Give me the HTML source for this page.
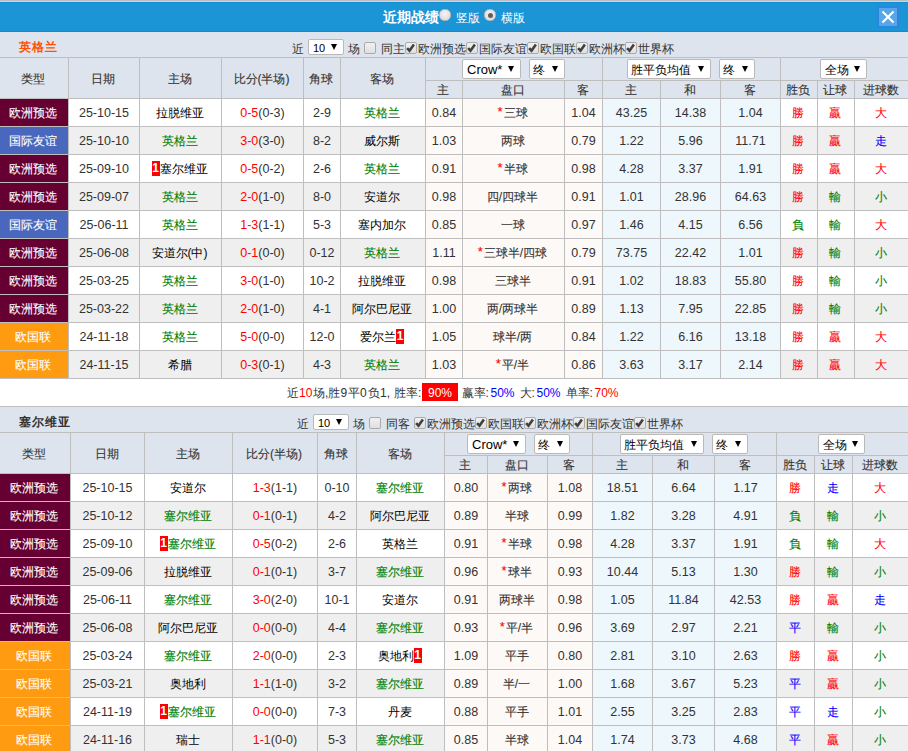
<!DOCTYPE html><html><head><meta charset="utf-8"><style>
html,body{margin:0;padding:0;width:908px;height:751px;overflow:hidden;background:#fff;font-family:"Liberation Sans",sans-serif;}
body>div{position:absolute;}
.t,.c{white-space:nowrap;overflow:visible;}
.c{-webkit-text-stroke:0.1px}
.sel{position:absolute;background:#fff;border:1px solid #b9b9b9;border-radius:2px;color:#000;font-family:"Liberation Sans",sans-serif;}
.arr{position:absolute;width:0;height:0;border-left:3px solid transparent;border-right:3px solid transparent;border-top:6px solid #000;}
.cb{position:absolute;width:10px;height:10px;border:1px solid #ababab;border-radius:2px;background:linear-gradient(#f0f0f0,#e0e0e0);box-sizing:content-box;}
.cb svg{left:-1px!important;top:-1px!important}
.bd{display:inline-block;background:#f00;color:#fff;font-weight:bold;font-size:12px;width:8px;height:15px;line-height:15px;text-align:center;vertical-align:middle;margin-top:-2px}

</style></head><body>
<div style="left:0px;top:0px;width:908px;height:1px;background:#bdbdc1;"></div>
<div style="left:0px;top:1px;width:908px;height:1px;background:#e8d3a6;"></div>
<div style="left:0px;top:2px;width:908px;height:30px;background:#1b95d6;"></div>
<div style="left:0px;top:2px;width:908px;height:1px;background:#0f8ed3;"></div>
<div style="left:0px;top:31px;width:908px;height:1px;background:#0c8cd2;"></div>
<div class="t" style="left:383px;top:7px;width:60px;height:20px;line-height:20px;color:#fff;font-size:14px;font-weight:bold;text-align:left;">近期战绩</div>
<div style="left:439px;top:9px;width:12px;height:12px;border-radius:50%;background:radial-gradient(circle at 50% 40%,#f4f4f4,#d0d0d0);box-shadow:0 0 0 0.5px #9a9a9a inset"></div>
<div class="t" style="left:456px;top:8px;width:30px;height:20px;line-height:20px;color:#fff;font-size:12px;font-weight:normal;text-align:left;">竖版</div>
<div style="left:484px;top:9px;width:12px;height:12px;border-radius:50%;background:radial-gradient(circle at 50% 40%,#f4f4f4,#d0d0d0);box-shadow:0 0 0 0.5px #9a9a9a inset"><div style="position:absolute;left:3.5px;top:3.5px;width:5px;height:5px;border-radius:50%;background:#606060"></div></div>
<div class="t" style="left:501px;top:8px;width:30px;height:20px;line-height:20px;color:#fff;font-size:12px;font-weight:normal;text-align:left;">横版</div>
<div style="left:877px;top:6px;width:22px;height:22px;background:#2b86de;"></div>
<div style="left:879px;top:8px;width:18px;height:18px;background:#57a6ea;"></div>
<svg style="position:absolute;left:877px;top:6px" width="22" height="22" viewBox="0 0 22 22"><path d="M6.2 6.2 L15.8 15.8 M15.8 6.2 L6.2 15.8" stroke="#fff" stroke-width="2.1" stroke-linecap="square"/></svg>
<div style="left:0px;top:32px;width:908px;height:25px;background:#dde4ed;"></div>
<div class="t" style="left:19px;top:32px;width:80px;height:30px;line-height:30px;color:#ff5200;font-size:12px;font-weight:bold;text-align:left;letter-spacing:1px">英格兰</div>
<div class="t" style="left:292px;top:40px;width:14px;height:18px;line-height:18px;color:#333;font-size:12px;font-weight:normal;text-align:left;">近</div>
<div class="sel" style="left:308px;top:39px;width:34px;height:14px;"><span style="position:absolute;left:4px;top:1px;line-height:14px;font-size:11px">10</span><span class="arr" style="right:6px;top:4px"></span></div>
<div class="t" style="left:348px;top:40px;width:14px;height:18px;line-height:18px;color:#333;font-size:12px;font-weight:normal;text-align:left;">场</div>
<div class="cb" style="left:364px;top:42px"></div>
<div class="t" style="left:381px;top:40px;width:30px;height:18px;line-height:18px;color:#333;font-size:12px;font-weight:normal;text-align:left;">同主</div>
<div class="cb" style="left:405px;top:42px"><svg width="12" height="12" viewBox="0 0 12 12" style="position:absolute;left:0;top:0"><path d="M2.1 6.2 L4.5 8.7 L8.9 2.5" stroke="#404040" stroke-width="2.6" fill="none"/></svg></div>
<div class="t" style="left:418px;top:40px;width:50px;height:18px;line-height:18px;color:#333;font-size:12px;font-weight:normal;text-align:left;">欧洲预选</div>
<div class="cb" style="left:466px;top:42px"><svg width="12" height="12" viewBox="0 0 12 12" style="position:absolute;left:0;top:0"><path d="M2.1 6.2 L4.5 8.7 L8.9 2.5" stroke="#404040" stroke-width="2.6" fill="none"/></svg></div>
<div class="t" style="left:479px;top:40px;width:50px;height:18px;line-height:18px;color:#333;font-size:12px;font-weight:normal;text-align:left;">国际友谊</div>
<div class="cb" style="left:527px;top:42px"><svg width="12" height="12" viewBox="0 0 12 12" style="position:absolute;left:0;top:0"><path d="M2.1 6.2 L4.5 8.7 L8.9 2.5" stroke="#404040" stroke-width="2.6" fill="none"/></svg></div>
<div class="t" style="left:540px;top:40px;width:38px;height:18px;line-height:18px;color:#333;font-size:12px;font-weight:normal;text-align:left;">欧国联</div>
<div class="cb" style="left:576px;top:42px"><svg width="12" height="12" viewBox="0 0 12 12" style="position:absolute;left:0;top:0"><path d="M2.1 6.2 L4.5 8.7 L8.9 2.5" stroke="#404040" stroke-width="2.6" fill="none"/></svg></div>
<div class="t" style="left:589px;top:40px;width:38px;height:18px;line-height:18px;color:#333;font-size:12px;font-weight:normal;text-align:left;">欧洲杯</div>
<div class="cb" style="left:625px;top:42px"><svg width="12" height="12" viewBox="0 0 12 12" style="position:absolute;left:0;top:0"><path d="M2.1 6.2 L4.5 8.7 L8.9 2.5" stroke="#404040" stroke-width="2.6" fill="none"/></svg></div>
<div class="t" style="left:638px;top:40px;width:38px;height:18px;line-height:18px;color:#333;font-size:12px;font-weight:normal;text-align:left;">世界杯</div>
<div style="left:0px;top:58px;width:908px;height:40px;background:#dde4ed;"></div>
<div style="left:0px;top:57px;width:908px;height:1px;background:#bebebe;"></div>
<div style="left:425px;top:80px;width:483px;height:1px;background:#bebebe;"></div>
<div class="c" style="left:-1px;top:59px;width:68px;height:40px;line-height:40px;color:#333;font-size:12px;font-weight:normal;text-align:center;">类型</div>
<div class="c" style="left:68px;top:59px;width:70px;height:40px;line-height:40px;color:#333;font-size:12px;font-weight:normal;text-align:center;">日期</div>
<div class="c" style="left:139px;top:59px;width:81px;height:40px;line-height:40px;color:#333;font-size:12px;font-weight:normal;text-align:center;">主场</div>
<div class="c" style="left:221px;top:59px;width:81px;height:40px;line-height:40px;color:#333;font-size:12px;font-weight:normal;text-align:center;">比分(半场)</div>
<div class="c" style="left:303px;top:59px;width:36px;height:40px;line-height:40px;color:#333;font-size:12px;font-weight:normal;text-align:center;">角球</div>
<div class="c" style="left:340px;top:59px;width:84px;height:40px;line-height:40px;color:#333;font-size:12px;font-weight:normal;text-align:center;">客场</div>
<div class="c" style="left:425px;top:82px;width:36px;height:17px;line-height:17px;color:#333;font-size:12px;font-weight:normal;text-align:center;">主</div>
<div class="c" style="left:462px;top:82px;width:101px;height:17px;line-height:17px;color:#333;font-size:12px;font-weight:normal;text-align:center;">盘口</div>
<div class="c" style="left:564px;top:82px;width:37px;height:17px;line-height:17px;color:#333;font-size:12px;font-weight:normal;text-align:center;">客</div>
<div class="c" style="left:602px;top:82px;width:57px;height:17px;line-height:17px;color:#333;font-size:12px;font-weight:normal;text-align:center;">主</div>
<div class="c" style="left:660px;top:82px;width:59px;height:17px;line-height:17px;color:#333;font-size:12px;font-weight:normal;text-align:center;">和</div>
<div class="c" style="left:720px;top:82px;width:59px;height:17px;line-height:17px;color:#333;font-size:12px;font-weight:normal;text-align:center;">客</div>
<div class="c" style="left:780px;top:82px;width:36px;height:17px;line-height:17px;color:#333;font-size:12px;font-weight:normal;text-align:center;">胜负</div>
<div class="c" style="left:817px;top:82px;width:36px;height:17px;line-height:17px;color:#333;font-size:12px;font-weight:normal;text-align:center;">让球</div>
<div class="c" style="left:854px;top:82px;width:53px;height:17px;line-height:17px;color:#333;font-size:12px;font-weight:normal;text-align:center;">进球数</div>
<div class="sel" style="left:462px;top:59px;width:57px;height:18px;"><span style="position:absolute;left:4px;top:1px;line-height:18px;font-size:13px">Crow*</span><span class="arr" style="right:6px;top:6px"></span></div>
<div class="sel" style="left:529px;top:59px;width:34px;height:18px;"><span style="position:absolute;left:3px;top:1px;line-height:18px;font-size:12px">终</span><span class="arr" style="right:6px;top:6px"></span></div>
<div class="sel" style="left:627px;top:59px;width:82px;height:18px;"><span style="position:absolute;left:3px;top:1px;line-height:18px;font-size:12px">胜平负均值</span><span class="arr" style="right:6px;top:6px"></span></div>
<div class="sel" style="left:719px;top:59px;width:34px;height:18px;"><span style="position:absolute;left:3px;top:1px;line-height:18px;font-size:12px">终</span><span class="arr" style="right:6px;top:6px"></span></div>
<div class="sel" style="left:820px;top:59px;width:45px;height:18px;"><span style="position:absolute;left:4px;top:1px;line-height:18px;font-size:12px">全场</span><span class="arr" style="right:6px;top:6px"></span></div>
<div style="left:0px;top:98px;width:908px;height:1px;background:#bebebe;"></div>
<div style="left:0px;top:99px;width:68px;height:27px;background:#660033;"></div>
<div style="left:69px;top:99px;width:356px;height:27px;background:#fff;"></div>
<div style="left:426px;top:99px;width:176px;height:27px;background:#fdf9f7;"></div>
<div style="left:603px;top:99px;width:177px;height:27px;background:#eef7fb;"></div>
<div style="left:781px;top:99px;width:127px;height:27px;background:#fff;"></div>
<div class="c" style="left:-1px;top:100px;width:68px;height:27px;line-height:27px;color:#fff;font-size:12px;font-weight:normal;text-align:center;">欧洲预选</div>
<div class="t" style="left:69px;top:100px;width:70px;height:27px;line-height:27px;color:#333;font-size:12.5px;font-weight:normal;text-align:center;">25-10-15</div>
<div class="t" style="left:139px;top:100px;width:81px;height:27px;line-height:27px;color:#000;font-size:12px;font-weight:normal;text-align:center;"><span style="color:#000">拉脱维亚</span></div>
<div class="t" style="left:222px;top:100px;width:81px;height:27px;line-height:27px;color:#333;font-size:12.5px;font-weight:normal;text-align:center;"><span style="color:#ff0000">0-5</span>(0-3)</div>
<div class="t" style="left:304px;top:100px;width:36px;height:27px;line-height:27px;color:#333;font-size:12.5px;font-weight:normal;text-align:center;">2-9</div>
<div class="t" style="left:340px;top:100px;width:84px;height:27px;line-height:27px;color:#000;font-size:12px;font-weight:normal;text-align:center;"><span style="color:#008000"><span style="-webkit-text-stroke:0.1px">英格兰</span></span></div>
<div class="t" style="left:426px;top:100px;width:36px;height:27px;line-height:27px;color:#333;font-size:12.5px;font-weight:normal;text-align:center;">0.84</div>
<div class="c" style="left:462px;top:100px;width:101px;height:27px;line-height:27px;color:#333;font-size:12px;font-weight:normal;text-align:center;"><span style="color:#ff0000;font-size:13px;line-height:0;padding-right:1px;position:relative;top:-1px">*</span>三球</div>
<div class="t" style="left:565px;top:100px;width:37px;height:27px;line-height:27px;color:#333;font-size:12.5px;font-weight:normal;text-align:center;">1.04</div>
<div class="t" style="left:603px;top:100px;width:57px;height:27px;line-height:27px;color:#333;font-size:12.5px;font-weight:normal;text-align:center;">43.25</div>
<div class="t" style="left:661px;top:100px;width:59px;height:27px;line-height:27px;color:#333;font-size:12.5px;font-weight:normal;text-align:center;">14.38</div>
<div class="t" style="left:721px;top:100px;width:59px;height:27px;line-height:27px;color:#333;font-size:12.5px;font-weight:normal;text-align:center;">1.04</div>
<div class="c" style="left:780px;top:100px;width:36px;height:27px;line-height:27px;color:#ff0000;font-size:12px;font-weight:normal;text-align:center;">勝</div>
<div class="c" style="left:817px;top:100px;width:36px;height:27px;line-height:27px;color:#ff0000;font-size:12px;font-weight:normal;text-align:center;">贏</div>
<div class="c" style="left:854px;top:100px;width:53px;height:27px;line-height:27px;color:#ff0000;font-size:12px;font-weight:normal;text-align:center;">大</div>
<div style="left:0px;top:126px;width:908px;height:1px;background:#bebebe;"></div>
<div style="left:0px;top:127px;width:68px;height:27px;background:#4867bd;"></div>
<div style="left:69px;top:127px;width:356px;height:27px;background:#efefef;"></div>
<div style="left:426px;top:127px;width:176px;height:27px;background:#fdf9f7;"></div>
<div style="left:603px;top:127px;width:177px;height:27px;background:#eef7fb;"></div>
<div style="left:781px;top:127px;width:127px;height:27px;background:#efefef;"></div>
<div class="c" style="left:-1px;top:128px;width:68px;height:27px;line-height:27px;color:#fff;font-size:12px;font-weight:normal;text-align:center;">国际友谊</div>
<div class="t" style="left:69px;top:128px;width:70px;height:27px;line-height:27px;color:#333;font-size:12.5px;font-weight:normal;text-align:center;">25-10-10</div>
<div class="t" style="left:139px;top:128px;width:81px;height:27px;line-height:27px;color:#000;font-size:12px;font-weight:normal;text-align:center;"><span style="color:#008000"><span style="-webkit-text-stroke:0.1px">英格兰</span></span></div>
<div class="t" style="left:222px;top:128px;width:81px;height:27px;line-height:27px;color:#333;font-size:12.5px;font-weight:normal;text-align:center;"><span style="color:#ff0000">3-0</span>(3-0)</div>
<div class="t" style="left:304px;top:128px;width:36px;height:27px;line-height:27px;color:#333;font-size:12.5px;font-weight:normal;text-align:center;">8-2</div>
<div class="t" style="left:340px;top:128px;width:84px;height:27px;line-height:27px;color:#000;font-size:12px;font-weight:normal;text-align:center;"><span style="color:#000">威尔斯</span></div>
<div class="t" style="left:426px;top:128px;width:36px;height:27px;line-height:27px;color:#333;font-size:12.5px;font-weight:normal;text-align:center;">1.03</div>
<div class="c" style="left:462px;top:128px;width:101px;height:27px;line-height:27px;color:#333;font-size:12px;font-weight:normal;text-align:center;">两球</div>
<div class="t" style="left:565px;top:128px;width:37px;height:27px;line-height:27px;color:#333;font-size:12.5px;font-weight:normal;text-align:center;">0.79</div>
<div class="t" style="left:603px;top:128px;width:57px;height:27px;line-height:27px;color:#333;font-size:12.5px;font-weight:normal;text-align:center;">1.22</div>
<div class="t" style="left:661px;top:128px;width:59px;height:27px;line-height:27px;color:#333;font-size:12.5px;font-weight:normal;text-align:center;">5.96</div>
<div class="t" style="left:721px;top:128px;width:59px;height:27px;line-height:27px;color:#333;font-size:12.5px;font-weight:normal;text-align:center;">11.71</div>
<div class="c" style="left:780px;top:128px;width:36px;height:27px;line-height:27px;color:#ff0000;font-size:12px;font-weight:normal;text-align:center;">勝</div>
<div class="c" style="left:817px;top:128px;width:36px;height:27px;line-height:27px;color:#ff0000;font-size:12px;font-weight:normal;text-align:center;">贏</div>
<div class="c" style="left:854px;top:128px;width:53px;height:27px;line-height:27px;color:#0000ff;font-size:12px;font-weight:normal;text-align:center;">走</div>
<div style="left:0px;top:154px;width:908px;height:1px;background:#bebebe;"></div>
<div style="left:0px;top:155px;width:68px;height:27px;background:#660033;"></div>
<div style="left:69px;top:155px;width:356px;height:27px;background:#fff;"></div>
<div style="left:426px;top:155px;width:176px;height:27px;background:#fdf9f7;"></div>
<div style="left:603px;top:155px;width:177px;height:27px;background:#eef7fb;"></div>
<div style="left:781px;top:155px;width:127px;height:27px;background:#fff;"></div>
<div class="c" style="left:-1px;top:156px;width:68px;height:27px;line-height:27px;color:#fff;font-size:12px;font-weight:normal;text-align:center;">欧洲预选</div>
<div class="t" style="left:69px;top:156px;width:70px;height:27px;line-height:27px;color:#333;font-size:12.5px;font-weight:normal;text-align:center;">25-09-10</div>
<div class="t" style="left:139px;top:156px;width:81px;height:27px;line-height:27px;color:#000;font-size:12px;font-weight:normal;text-align:center;"><span class="bd">1</span><span style="color:#000">塞尔维亚</span></div>
<div class="t" style="left:222px;top:156px;width:81px;height:27px;line-height:27px;color:#333;font-size:12.5px;font-weight:normal;text-align:center;"><span style="color:#ff0000">0-5</span>(0-2)</div>
<div class="t" style="left:304px;top:156px;width:36px;height:27px;line-height:27px;color:#333;font-size:12.5px;font-weight:normal;text-align:center;">2-6</div>
<div class="t" style="left:340px;top:156px;width:84px;height:27px;line-height:27px;color:#000;font-size:12px;font-weight:normal;text-align:center;"><span style="color:#008000"><span style="-webkit-text-stroke:0.1px">英格兰</span></span></div>
<div class="t" style="left:426px;top:156px;width:36px;height:27px;line-height:27px;color:#333;font-size:12.5px;font-weight:normal;text-align:center;">0.91</div>
<div class="c" style="left:462px;top:156px;width:101px;height:27px;line-height:27px;color:#333;font-size:12px;font-weight:normal;text-align:center;"><span style="color:#ff0000;font-size:13px;line-height:0;padding-right:1px;position:relative;top:-1px">*</span>半球</div>
<div class="t" style="left:565px;top:156px;width:37px;height:27px;line-height:27px;color:#333;font-size:12.5px;font-weight:normal;text-align:center;">0.98</div>
<div class="t" style="left:603px;top:156px;width:57px;height:27px;line-height:27px;color:#333;font-size:12.5px;font-weight:normal;text-align:center;">4.28</div>
<div class="t" style="left:661px;top:156px;width:59px;height:27px;line-height:27px;color:#333;font-size:12.5px;font-weight:normal;text-align:center;">3.37</div>
<div class="t" style="left:721px;top:156px;width:59px;height:27px;line-height:27px;color:#333;font-size:12.5px;font-weight:normal;text-align:center;">1.91</div>
<div class="c" style="left:780px;top:156px;width:36px;height:27px;line-height:27px;color:#ff0000;font-size:12px;font-weight:normal;text-align:center;">勝</div>
<div class="c" style="left:817px;top:156px;width:36px;height:27px;line-height:27px;color:#ff0000;font-size:12px;font-weight:normal;text-align:center;">贏</div>
<div class="c" style="left:854px;top:156px;width:53px;height:27px;line-height:27px;color:#ff0000;font-size:12px;font-weight:normal;text-align:center;">大</div>
<div style="left:0px;top:182px;width:908px;height:1px;background:#bebebe;"></div>
<div style="left:0px;top:183px;width:68px;height:27px;background:#660033;"></div>
<div style="left:69px;top:183px;width:356px;height:27px;background:#efefef;"></div>
<div style="left:426px;top:183px;width:176px;height:27px;background:#fdf9f7;"></div>
<div style="left:603px;top:183px;width:177px;height:27px;background:#eef7fb;"></div>
<div style="left:781px;top:183px;width:127px;height:27px;background:#efefef;"></div>
<div class="c" style="left:-1px;top:184px;width:68px;height:27px;line-height:27px;color:#fff;font-size:12px;font-weight:normal;text-align:center;">欧洲预选</div>
<div class="t" style="left:69px;top:184px;width:70px;height:27px;line-height:27px;color:#333;font-size:12.5px;font-weight:normal;text-align:center;">25-09-07</div>
<div class="t" style="left:139px;top:184px;width:81px;height:27px;line-height:27px;color:#000;font-size:12px;font-weight:normal;text-align:center;"><span style="color:#008000"><span style="-webkit-text-stroke:0.1px">英格兰</span></span></div>
<div class="t" style="left:222px;top:184px;width:81px;height:27px;line-height:27px;color:#333;font-size:12.5px;font-weight:normal;text-align:center;"><span style="color:#ff0000">2-0</span>(1-0)</div>
<div class="t" style="left:304px;top:184px;width:36px;height:27px;line-height:27px;color:#333;font-size:12.5px;font-weight:normal;text-align:center;">8-0</div>
<div class="t" style="left:340px;top:184px;width:84px;height:27px;line-height:27px;color:#000;font-size:12px;font-weight:normal;text-align:center;"><span style="color:#000">安道尔</span></div>
<div class="t" style="left:426px;top:184px;width:36px;height:27px;line-height:27px;color:#333;font-size:12.5px;font-weight:normal;text-align:center;">0.98</div>
<div class="c" style="left:462px;top:184px;width:101px;height:27px;line-height:27px;color:#333;font-size:12px;font-weight:normal;text-align:center;">四/四球半</div>
<div class="t" style="left:565px;top:184px;width:37px;height:27px;line-height:27px;color:#333;font-size:12.5px;font-weight:normal;text-align:center;">0.91</div>
<div class="t" style="left:603px;top:184px;width:57px;height:27px;line-height:27px;color:#333;font-size:12.5px;font-weight:normal;text-align:center;">1.01</div>
<div class="t" style="left:661px;top:184px;width:59px;height:27px;line-height:27px;color:#333;font-size:12.5px;font-weight:normal;text-align:center;">28.96</div>
<div class="t" style="left:721px;top:184px;width:59px;height:27px;line-height:27px;color:#333;font-size:12.5px;font-weight:normal;text-align:center;">64.63</div>
<div class="c" style="left:780px;top:184px;width:36px;height:27px;line-height:27px;color:#ff0000;font-size:12px;font-weight:normal;text-align:center;">勝</div>
<div class="c" style="left:817px;top:184px;width:36px;height:27px;line-height:27px;color:#008000;font-size:12px;font-weight:normal;text-align:center;">輸</div>
<div class="c" style="left:854px;top:184px;width:53px;height:27px;line-height:27px;color:#008000;font-size:12px;font-weight:normal;text-align:center;">小</div>
<div style="left:0px;top:210px;width:908px;height:1px;background:#bebebe;"></div>
<div style="left:0px;top:211px;width:68px;height:27px;background:#4867bd;"></div>
<div style="left:69px;top:211px;width:356px;height:27px;background:#fff;"></div>
<div style="left:426px;top:211px;width:176px;height:27px;background:#fdf9f7;"></div>
<div style="left:603px;top:211px;width:177px;height:27px;background:#eef7fb;"></div>
<div style="left:781px;top:211px;width:127px;height:27px;background:#fff;"></div>
<div class="c" style="left:-1px;top:212px;width:68px;height:27px;line-height:27px;color:#fff;font-size:12px;font-weight:normal;text-align:center;">国际友谊</div>
<div class="t" style="left:69px;top:212px;width:70px;height:27px;line-height:27px;color:#333;font-size:12.5px;font-weight:normal;text-align:center;">25-06-11</div>
<div class="t" style="left:139px;top:212px;width:81px;height:27px;line-height:27px;color:#000;font-size:12px;font-weight:normal;text-align:center;"><span style="color:#008000"><span style="-webkit-text-stroke:0.1px">英格兰</span></span></div>
<div class="t" style="left:222px;top:212px;width:81px;height:27px;line-height:27px;color:#333;font-size:12.5px;font-weight:normal;text-align:center;"><span style="color:#ff0000">1-3</span>(1-1)</div>
<div class="t" style="left:304px;top:212px;width:36px;height:27px;line-height:27px;color:#333;font-size:12.5px;font-weight:normal;text-align:center;">5-3</div>
<div class="t" style="left:340px;top:212px;width:84px;height:27px;line-height:27px;color:#000;font-size:12px;font-weight:normal;text-align:center;"><span style="color:#000">塞内加尔</span></div>
<div class="t" style="left:426px;top:212px;width:36px;height:27px;line-height:27px;color:#333;font-size:12.5px;font-weight:normal;text-align:center;">0.85</div>
<div class="c" style="left:462px;top:212px;width:101px;height:27px;line-height:27px;color:#333;font-size:12px;font-weight:normal;text-align:center;">一球</div>
<div class="t" style="left:565px;top:212px;width:37px;height:27px;line-height:27px;color:#333;font-size:12.5px;font-weight:normal;text-align:center;">0.97</div>
<div class="t" style="left:603px;top:212px;width:57px;height:27px;line-height:27px;color:#333;font-size:12.5px;font-weight:normal;text-align:center;">1.46</div>
<div class="t" style="left:661px;top:212px;width:59px;height:27px;line-height:27px;color:#333;font-size:12.5px;font-weight:normal;text-align:center;">4.15</div>
<div class="t" style="left:721px;top:212px;width:59px;height:27px;line-height:27px;color:#333;font-size:12.5px;font-weight:normal;text-align:center;">6.56</div>
<div class="c" style="left:780px;top:212px;width:36px;height:27px;line-height:27px;color:#008000;font-size:12px;font-weight:normal;text-align:center;">負</div>
<div class="c" style="left:817px;top:212px;width:36px;height:27px;line-height:27px;color:#008000;font-size:12px;font-weight:normal;text-align:center;">輸</div>
<div class="c" style="left:854px;top:212px;width:53px;height:27px;line-height:27px;color:#ff0000;font-size:12px;font-weight:normal;text-align:center;">大</div>
<div style="left:0px;top:238px;width:908px;height:1px;background:#bebebe;"></div>
<div style="left:0px;top:239px;width:68px;height:27px;background:#660033;"></div>
<div style="left:69px;top:239px;width:356px;height:27px;background:#efefef;"></div>
<div style="left:426px;top:239px;width:176px;height:27px;background:#fdf9f7;"></div>
<div style="left:603px;top:239px;width:177px;height:27px;background:#eef7fb;"></div>
<div style="left:781px;top:239px;width:127px;height:27px;background:#efefef;"></div>
<div class="c" style="left:-1px;top:240px;width:68px;height:27px;line-height:27px;color:#fff;font-size:12px;font-weight:normal;text-align:center;">欧洲预选</div>
<div class="t" style="left:69px;top:240px;width:70px;height:27px;line-height:27px;color:#333;font-size:12.5px;font-weight:normal;text-align:center;">25-06-08</div>
<div class="t" style="left:139px;top:240px;width:81px;height:27px;line-height:27px;color:#000;font-size:12px;font-weight:normal;text-align:center;"><span style="color:#000">安道尔(中)</span></div>
<div class="t" style="left:222px;top:240px;width:81px;height:27px;line-height:27px;color:#333;font-size:12.5px;font-weight:normal;text-align:center;"><span style="color:#ff0000">0-1</span>(0-0)</div>
<div class="t" style="left:304px;top:240px;width:36px;height:27px;line-height:27px;color:#333;font-size:12.5px;font-weight:normal;text-align:center;">0-12</div>
<div class="t" style="left:340px;top:240px;width:84px;height:27px;line-height:27px;color:#000;font-size:12px;font-weight:normal;text-align:center;"><span style="color:#008000"><span style="-webkit-text-stroke:0.1px">英格兰</span></span></div>
<div class="t" style="left:426px;top:240px;width:36px;height:27px;line-height:27px;color:#333;font-size:12.5px;font-weight:normal;text-align:center;">1.11</div>
<div class="c" style="left:462px;top:240px;width:101px;height:27px;line-height:27px;color:#333;font-size:12px;font-weight:normal;text-align:center;"><span style="color:#ff0000;font-size:13px;line-height:0;padding-right:1px;position:relative;top:-1px">*</span>三球半/四球</div>
<div class="t" style="left:565px;top:240px;width:37px;height:27px;line-height:27px;color:#333;font-size:12.5px;font-weight:normal;text-align:center;">0.79</div>
<div class="t" style="left:603px;top:240px;width:57px;height:27px;line-height:27px;color:#333;font-size:12.5px;font-weight:normal;text-align:center;">73.75</div>
<div class="t" style="left:661px;top:240px;width:59px;height:27px;line-height:27px;color:#333;font-size:12.5px;font-weight:normal;text-align:center;">22.42</div>
<div class="t" style="left:721px;top:240px;width:59px;height:27px;line-height:27px;color:#333;font-size:12.5px;font-weight:normal;text-align:center;">1.01</div>
<div class="c" style="left:780px;top:240px;width:36px;height:27px;line-height:27px;color:#ff0000;font-size:12px;font-weight:normal;text-align:center;">勝</div>
<div class="c" style="left:817px;top:240px;width:36px;height:27px;line-height:27px;color:#008000;font-size:12px;font-weight:normal;text-align:center;">輸</div>
<div class="c" style="left:854px;top:240px;width:53px;height:27px;line-height:27px;color:#008000;font-size:12px;font-weight:normal;text-align:center;">小</div>
<div style="left:0px;top:266px;width:908px;height:1px;background:#bebebe;"></div>
<div style="left:0px;top:267px;width:68px;height:27px;background:#660033;"></div>
<div style="left:69px;top:267px;width:356px;height:27px;background:#fff;"></div>
<div style="left:426px;top:267px;width:176px;height:27px;background:#fdf9f7;"></div>
<div style="left:603px;top:267px;width:177px;height:27px;background:#eef7fb;"></div>
<div style="left:781px;top:267px;width:127px;height:27px;background:#fff;"></div>
<div class="c" style="left:-1px;top:268px;width:68px;height:27px;line-height:27px;color:#fff;font-size:12px;font-weight:normal;text-align:center;">欧洲预选</div>
<div class="t" style="left:69px;top:268px;width:70px;height:27px;line-height:27px;color:#333;font-size:12.5px;font-weight:normal;text-align:center;">25-03-25</div>
<div class="t" style="left:139px;top:268px;width:81px;height:27px;line-height:27px;color:#000;font-size:12px;font-weight:normal;text-align:center;"><span style="color:#008000"><span style="-webkit-text-stroke:0.1px">英格兰</span></span></div>
<div class="t" style="left:222px;top:268px;width:81px;height:27px;line-height:27px;color:#333;font-size:12.5px;font-weight:normal;text-align:center;"><span style="color:#ff0000">3-0</span>(1-0)</div>
<div class="t" style="left:304px;top:268px;width:36px;height:27px;line-height:27px;color:#333;font-size:12.5px;font-weight:normal;text-align:center;">10-2</div>
<div class="t" style="left:340px;top:268px;width:84px;height:27px;line-height:27px;color:#000;font-size:12px;font-weight:normal;text-align:center;"><span style="color:#000">拉脱维亚</span></div>
<div class="t" style="left:426px;top:268px;width:36px;height:27px;line-height:27px;color:#333;font-size:12.5px;font-weight:normal;text-align:center;">0.98</div>
<div class="c" style="left:462px;top:268px;width:101px;height:27px;line-height:27px;color:#333;font-size:12px;font-weight:normal;text-align:center;">三球半</div>
<div class="t" style="left:565px;top:268px;width:37px;height:27px;line-height:27px;color:#333;font-size:12.5px;font-weight:normal;text-align:center;">0.91</div>
<div class="t" style="left:603px;top:268px;width:57px;height:27px;line-height:27px;color:#333;font-size:12.5px;font-weight:normal;text-align:center;">1.02</div>
<div class="t" style="left:661px;top:268px;width:59px;height:27px;line-height:27px;color:#333;font-size:12.5px;font-weight:normal;text-align:center;">18.83</div>
<div class="t" style="left:721px;top:268px;width:59px;height:27px;line-height:27px;color:#333;font-size:12.5px;font-weight:normal;text-align:center;">55.80</div>
<div class="c" style="left:780px;top:268px;width:36px;height:27px;line-height:27px;color:#ff0000;font-size:12px;font-weight:normal;text-align:center;">勝</div>
<div class="c" style="left:817px;top:268px;width:36px;height:27px;line-height:27px;color:#008000;font-size:12px;font-weight:normal;text-align:center;">輸</div>
<div class="c" style="left:854px;top:268px;width:53px;height:27px;line-height:27px;color:#008000;font-size:12px;font-weight:normal;text-align:center;">小</div>
<div style="left:0px;top:294px;width:908px;height:1px;background:#bebebe;"></div>
<div style="left:0px;top:295px;width:68px;height:27px;background:#660033;"></div>
<div style="left:69px;top:295px;width:356px;height:27px;background:#efefef;"></div>
<div style="left:426px;top:295px;width:176px;height:27px;background:#fdf9f7;"></div>
<div style="left:603px;top:295px;width:177px;height:27px;background:#eef7fb;"></div>
<div style="left:781px;top:295px;width:127px;height:27px;background:#efefef;"></div>
<div class="c" style="left:-1px;top:296px;width:68px;height:27px;line-height:27px;color:#fff;font-size:12px;font-weight:normal;text-align:center;">欧洲预选</div>
<div class="t" style="left:69px;top:296px;width:70px;height:27px;line-height:27px;color:#333;font-size:12.5px;font-weight:normal;text-align:center;">25-03-22</div>
<div class="t" style="left:139px;top:296px;width:81px;height:27px;line-height:27px;color:#000;font-size:12px;font-weight:normal;text-align:center;"><span style="color:#008000"><span style="-webkit-text-stroke:0.1px">英格兰</span></span></div>
<div class="t" style="left:222px;top:296px;width:81px;height:27px;line-height:27px;color:#333;font-size:12.5px;font-weight:normal;text-align:center;"><span style="color:#ff0000">2-0</span>(1-0)</div>
<div class="t" style="left:304px;top:296px;width:36px;height:27px;line-height:27px;color:#333;font-size:12.5px;font-weight:normal;text-align:center;">4-1</div>
<div class="t" style="left:340px;top:296px;width:84px;height:27px;line-height:27px;color:#000;font-size:12px;font-weight:normal;text-align:center;"><span style="color:#000">阿尔巴尼亚</span></div>
<div class="t" style="left:426px;top:296px;width:36px;height:27px;line-height:27px;color:#333;font-size:12.5px;font-weight:normal;text-align:center;">1.00</div>
<div class="c" style="left:462px;top:296px;width:101px;height:27px;line-height:27px;color:#333;font-size:12px;font-weight:normal;text-align:center;">两/两球半</div>
<div class="t" style="left:565px;top:296px;width:37px;height:27px;line-height:27px;color:#333;font-size:12.5px;font-weight:normal;text-align:center;">0.89</div>
<div class="t" style="left:603px;top:296px;width:57px;height:27px;line-height:27px;color:#333;font-size:12.5px;font-weight:normal;text-align:center;">1.13</div>
<div class="t" style="left:661px;top:296px;width:59px;height:27px;line-height:27px;color:#333;font-size:12.5px;font-weight:normal;text-align:center;">7.95</div>
<div class="t" style="left:721px;top:296px;width:59px;height:27px;line-height:27px;color:#333;font-size:12.5px;font-weight:normal;text-align:center;">22.85</div>
<div class="c" style="left:780px;top:296px;width:36px;height:27px;line-height:27px;color:#ff0000;font-size:12px;font-weight:normal;text-align:center;">勝</div>
<div class="c" style="left:817px;top:296px;width:36px;height:27px;line-height:27px;color:#008000;font-size:12px;font-weight:normal;text-align:center;">輸</div>
<div class="c" style="left:854px;top:296px;width:53px;height:27px;line-height:27px;color:#008000;font-size:12px;font-weight:normal;text-align:center;">小</div>
<div style="left:0px;top:322px;width:908px;height:1px;background:#bebebe;"></div>
<div style="left:0px;top:323px;width:68px;height:27px;background:#fe9b10;"></div>
<div style="left:69px;top:323px;width:356px;height:27px;background:#fff;"></div>
<div style="left:426px;top:323px;width:176px;height:27px;background:#fdf9f7;"></div>
<div style="left:603px;top:323px;width:177px;height:27px;background:#eef7fb;"></div>
<div style="left:781px;top:323px;width:127px;height:27px;background:#fff;"></div>
<div class="c" style="left:-1px;top:324px;width:68px;height:27px;line-height:27px;color:#fff;font-size:12px;font-weight:normal;text-align:center;">欧国联</div>
<div class="t" style="left:69px;top:324px;width:70px;height:27px;line-height:27px;color:#333;font-size:12.5px;font-weight:normal;text-align:center;">24-11-18</div>
<div class="t" style="left:139px;top:324px;width:81px;height:27px;line-height:27px;color:#000;font-size:12px;font-weight:normal;text-align:center;"><span style="color:#008000"><span style="-webkit-text-stroke:0.1px">英格兰</span></span></div>
<div class="t" style="left:222px;top:324px;width:81px;height:27px;line-height:27px;color:#333;font-size:12.5px;font-weight:normal;text-align:center;"><span style="color:#ff0000">5-0</span>(0-0)</div>
<div class="t" style="left:304px;top:324px;width:36px;height:27px;line-height:27px;color:#333;font-size:12.5px;font-weight:normal;text-align:center;">12-0</div>
<div class="t" style="left:340px;top:324px;width:84px;height:27px;line-height:27px;color:#000;font-size:12px;font-weight:normal;text-align:center;"><span style="color:#000">爱尔兰</span><span class="bd">1</span></div>
<div class="t" style="left:426px;top:324px;width:36px;height:27px;line-height:27px;color:#333;font-size:12.5px;font-weight:normal;text-align:center;">1.05</div>
<div class="c" style="left:462px;top:324px;width:101px;height:27px;line-height:27px;color:#333;font-size:12px;font-weight:normal;text-align:center;">球半/两</div>
<div class="t" style="left:565px;top:324px;width:37px;height:27px;line-height:27px;color:#333;font-size:12.5px;font-weight:normal;text-align:center;">0.84</div>
<div class="t" style="left:603px;top:324px;width:57px;height:27px;line-height:27px;color:#333;font-size:12.5px;font-weight:normal;text-align:center;">1.22</div>
<div class="t" style="left:661px;top:324px;width:59px;height:27px;line-height:27px;color:#333;font-size:12.5px;font-weight:normal;text-align:center;">6.16</div>
<div class="t" style="left:721px;top:324px;width:59px;height:27px;line-height:27px;color:#333;font-size:12.5px;font-weight:normal;text-align:center;">13.18</div>
<div class="c" style="left:780px;top:324px;width:36px;height:27px;line-height:27px;color:#ff0000;font-size:12px;font-weight:normal;text-align:center;">勝</div>
<div class="c" style="left:817px;top:324px;width:36px;height:27px;line-height:27px;color:#ff0000;font-size:12px;font-weight:normal;text-align:center;">贏</div>
<div class="c" style="left:854px;top:324px;width:53px;height:27px;line-height:27px;color:#ff0000;font-size:12px;font-weight:normal;text-align:center;">大</div>
<div style="left:0px;top:350px;width:908px;height:1px;background:#bebebe;"></div>
<div style="left:0px;top:351px;width:68px;height:27px;background:#fe9b10;"></div>
<div style="left:69px;top:351px;width:356px;height:27px;background:#efefef;"></div>
<div style="left:426px;top:351px;width:176px;height:27px;background:#fdf9f7;"></div>
<div style="left:603px;top:351px;width:177px;height:27px;background:#eef7fb;"></div>
<div style="left:781px;top:351px;width:127px;height:27px;background:#efefef;"></div>
<div class="c" style="left:-1px;top:352px;width:68px;height:27px;line-height:27px;color:#fff;font-size:12px;font-weight:normal;text-align:center;">欧国联</div>
<div class="t" style="left:69px;top:352px;width:70px;height:27px;line-height:27px;color:#333;font-size:12.5px;font-weight:normal;text-align:center;">24-11-15</div>
<div class="t" style="left:139px;top:352px;width:81px;height:27px;line-height:27px;color:#000;font-size:12px;font-weight:normal;text-align:center;"><span style="color:#000">希腊</span></div>
<div class="t" style="left:222px;top:352px;width:81px;height:27px;line-height:27px;color:#333;font-size:12.5px;font-weight:normal;text-align:center;"><span style="color:#ff0000">0-3</span>(0-1)</div>
<div class="t" style="left:304px;top:352px;width:36px;height:27px;line-height:27px;color:#333;font-size:12.5px;font-weight:normal;text-align:center;">4-3</div>
<div class="t" style="left:340px;top:352px;width:84px;height:27px;line-height:27px;color:#000;font-size:12px;font-weight:normal;text-align:center;"><span style="color:#008000"><span style="-webkit-text-stroke:0.1px">英格兰</span></span></div>
<div class="t" style="left:426px;top:352px;width:36px;height:27px;line-height:27px;color:#333;font-size:12.5px;font-weight:normal;text-align:center;">1.03</div>
<div class="c" style="left:462px;top:352px;width:101px;height:27px;line-height:27px;color:#333;font-size:12px;font-weight:normal;text-align:center;"><span style="color:#ff0000;font-size:13px;line-height:0;padding-right:1px;position:relative;top:-1px">*</span>平/半</div>
<div class="t" style="left:565px;top:352px;width:37px;height:27px;line-height:27px;color:#333;font-size:12.5px;font-weight:normal;text-align:center;">0.86</div>
<div class="t" style="left:603px;top:352px;width:57px;height:27px;line-height:27px;color:#333;font-size:12.5px;font-weight:normal;text-align:center;">3.63</div>
<div class="t" style="left:661px;top:352px;width:59px;height:27px;line-height:27px;color:#333;font-size:12.5px;font-weight:normal;text-align:center;">3.17</div>
<div class="t" style="left:721px;top:352px;width:59px;height:27px;line-height:27px;color:#333;font-size:12.5px;font-weight:normal;text-align:center;">2.14</div>
<div class="c" style="left:780px;top:352px;width:36px;height:27px;line-height:27px;color:#ff0000;font-size:12px;font-weight:normal;text-align:center;">勝</div>
<div class="c" style="left:817px;top:352px;width:36px;height:27px;line-height:27px;color:#ff0000;font-size:12px;font-weight:normal;text-align:center;">贏</div>
<div class="c" style="left:854px;top:352px;width:53px;height:27px;line-height:27px;color:#ff0000;font-size:12px;font-weight:normal;text-align:center;">大</div>
<div style="left:0px;top:378px;width:908px;height:1px;background:#bebebe;"></div>
<div style="left:68px;top:57px;width:1px;height:321px;background:#bebebe;"></div>
<div style="left:139px;top:57px;width:1px;height:321px;background:#bebebe;"></div>
<div style="left:221px;top:57px;width:1px;height:321px;background:#bebebe;"></div>
<div style="left:303px;top:57px;width:1px;height:321px;background:#bebebe;"></div>
<div style="left:340px;top:57px;width:1px;height:321px;background:#bebebe;"></div>
<div style="left:425px;top:57px;width:1px;height:321px;background:#bebebe;"></div>
<div style="left:462px;top:80px;width:1px;height:298px;background:#bebebe;"></div>
<div style="left:564px;top:80px;width:1px;height:298px;background:#bebebe;"></div>
<div style="left:602px;top:57px;width:1px;height:321px;background:#bebebe;"></div>
<div style="left:660px;top:80px;width:1px;height:298px;background:#bebebe;"></div>
<div style="left:720px;top:80px;width:1px;height:298px;background:#bebebe;"></div>
<div style="left:780px;top:57px;width:1px;height:321px;background:#bebebe;"></div>
<div style="left:817px;top:80px;width:1px;height:298px;background:#bebebe;"></div>
<div style="left:854px;top:80px;width:1px;height:298px;background:#bebebe;"></div>
<div style="left:0px;top:379px;width:908px;height:27px;background:#fff;"></div>
<div class="t" style="left:287px;top:380px;height:27px;line-height:27px;font-size:12px;color:#333">近</div>
<div class="t" style="left:299px;top:380px;height:27px;line-height:27px;font-size:12px;color:#f00">10</div>
<div class="t" style="left:313px;top:380px;height:27px;line-height:27px;font-size:12px;color:#333">场,</div>
<div class="t" style="left:328px;top:380px;height:27px;line-height:27px;font-size:12px;color:#333">胜</div>
<div class="t" style="left:340.5px;top:380px;height:27px;line-height:27px;font-size:12px;color:#333">9</div>
<div class="t" style="left:348px;top:380px;height:27px;line-height:27px;font-size:12px;color:#333">平</div>
<div class="t" style="left:360px;top:380px;height:27px;line-height:27px;font-size:12px;color:#333">0</div>
<div class="t" style="left:367.5px;top:380px;height:27px;line-height:27px;font-size:12px;color:#333">负</div>
<div class="t" style="left:380px;top:380px;height:27px;line-height:27px;font-size:12px;color:#333">1,</div>
<div class="t" style="left:394px;top:380px;height:27px;line-height:27px;font-size:12px;color:#333">胜率:</div>
<div class="t" style="left:461.5px;top:380px;height:27px;line-height:27px;font-size:12px;color:#333">赢率:</div>
<div class="t" style="left:490.5px;top:380px;height:27px;line-height:27px;font-size:12px;color:#00f">50%</div>
<div class="t" style="left:519.5px;top:380px;height:27px;line-height:27px;font-size:12px;color:#333">大:</div>
<div class="t" style="left:536.5px;top:380px;height:27px;line-height:27px;font-size:12px;color:#00f">50%</div>
<div class="t" style="left:565.5px;top:380px;height:27px;line-height:27px;font-size:12px;color:#333">单率:</div>
<div class="t" style="left:594.5px;top:380px;height:27px;line-height:27px;font-size:12px;color:#f00">70%</div>
<div style="left:422px;top:383px;width:36px;height:18px;background:#f00;"></div>
<div class="t" style="left:422px;top:380px;width:36px;height:27px;line-height:27px;text-align:center;font-size:12px;color:#fff">90%</div>
<div style="left:0px;top:406px;width:908px;height:1px;background:#bebebe;"></div>
<div style="left:0px;top:407px;width:908px;height:25px;background:#dde4ed;"></div>
<div class="t" style="left:19px;top:407px;width:80px;height:30px;line-height:30px;color:#333;font-size:12px;font-weight:bold;text-align:left;letter-spacing:1px">塞尔维亚</div>
<div class="t" style="left:297px;top:415px;width:14px;height:18px;line-height:18px;color:#333;font-size:12px;font-weight:normal;text-align:left;">近</div>
<div class="sel" style="left:313px;top:414px;width:34px;height:14px;"><span style="position:absolute;left:4px;top:1px;line-height:14px;font-size:11px">10</span><span class="arr" style="right:6px;top:4px"></span></div>
<div class="t" style="left:353px;top:415px;width:14px;height:18px;line-height:18px;color:#333;font-size:12px;font-weight:normal;text-align:left;">场</div>
<div class="cb" style="left:369px;top:417px"></div>
<div class="t" style="left:386px;top:415px;width:30px;height:18px;line-height:18px;color:#333;font-size:12px;font-weight:normal;text-align:left;">同客</div>
<div class="cb" style="left:414px;top:417px"><svg width="12" height="12" viewBox="0 0 12 12" style="position:absolute;left:0;top:0"><path d="M2.1 6.2 L4.5 8.7 L8.9 2.5" stroke="#404040" stroke-width="2.6" fill="none"/></svg></div>
<div class="t" style="left:427px;top:415px;width:50px;height:18px;line-height:18px;color:#333;font-size:12px;font-weight:normal;text-align:left;">欧洲预选</div>
<div class="cb" style="left:475px;top:417px"><svg width="12" height="12" viewBox="0 0 12 12" style="position:absolute;left:0;top:0"><path d="M2.1 6.2 L4.5 8.7 L8.9 2.5" stroke="#404040" stroke-width="2.6" fill="none"/></svg></div>
<div class="t" style="left:488px;top:415px;width:38px;height:18px;line-height:18px;color:#333;font-size:12px;font-weight:normal;text-align:left;">欧国联</div>
<div class="cb" style="left:524px;top:417px"><svg width="12" height="12" viewBox="0 0 12 12" style="position:absolute;left:0;top:0"><path d="M2.1 6.2 L4.5 8.7 L8.9 2.5" stroke="#404040" stroke-width="2.6" fill="none"/></svg></div>
<div class="t" style="left:537px;top:415px;width:38px;height:18px;line-height:18px;color:#333;font-size:12px;font-weight:normal;text-align:left;">欧洲杯</div>
<div class="cb" style="left:573px;top:417px"><svg width="12" height="12" viewBox="0 0 12 12" style="position:absolute;left:0;top:0"><path d="M2.1 6.2 L4.5 8.7 L8.9 2.5" stroke="#404040" stroke-width="2.6" fill="none"/></svg></div>
<div class="t" style="left:586px;top:415px;width:50px;height:18px;line-height:18px;color:#333;font-size:12px;font-weight:normal;text-align:left;">国际友谊</div>
<div class="cb" style="left:634px;top:417px"><svg width="12" height="12" viewBox="0 0 12 12" style="position:absolute;left:0;top:0"><path d="M2.1 6.2 L4.5 8.7 L8.9 2.5" stroke="#404040" stroke-width="2.6" fill="none"/></svg></div>
<div class="t" style="left:647px;top:415px;width:38px;height:18px;line-height:18px;color:#333;font-size:12px;font-weight:normal;text-align:left;">世界杯</div>
<div style="left:0px;top:433px;width:908px;height:40px;background:#dde4ed;"></div>
<div style="left:0px;top:432px;width:908px;height:1px;background:#bebebe;"></div>
<div style="left:444px;top:455px;width:464px;height:1px;background:#bebebe;"></div>
<div class="c" style="left:-1px;top:434px;width:70px;height:40px;line-height:40px;color:#333;font-size:12px;font-weight:normal;text-align:center;">类型</div>
<div class="c" style="left:70px;top:434px;width:73px;height:40px;line-height:40px;color:#333;font-size:12px;font-weight:normal;text-align:center;">日期</div>
<div class="c" style="left:144px;top:434px;width:87px;height:40px;line-height:40px;color:#333;font-size:12px;font-weight:normal;text-align:center;">主场</div>
<div class="c" style="left:232px;top:434px;width:84px;height:40px;line-height:40px;color:#333;font-size:12px;font-weight:normal;text-align:center;">比分(半场)</div>
<div class="c" style="left:317px;top:434px;width:38px;height:40px;line-height:40px;color:#333;font-size:12px;font-weight:normal;text-align:center;">角球</div>
<div class="c" style="left:356px;top:434px;width:87px;height:40px;line-height:40px;color:#333;font-size:12px;font-weight:normal;text-align:center;">客场</div>
<div class="c" style="left:444px;top:457px;width:42px;height:17px;line-height:17px;color:#333;font-size:12px;font-weight:normal;text-align:center;">主</div>
<div class="c" style="left:487px;top:457px;width:59px;height:17px;line-height:17px;color:#333;font-size:12px;font-weight:normal;text-align:center;">盘口</div>
<div class="c" style="left:547px;top:457px;width:44px;height:17px;line-height:17px;color:#333;font-size:12px;font-weight:normal;text-align:center;">客</div>
<div class="c" style="left:592px;top:457px;width:59px;height:17px;line-height:17px;color:#333;font-size:12px;font-weight:normal;text-align:center;">主</div>
<div class="c" style="left:652px;top:457px;width:61px;height:17px;line-height:17px;color:#333;font-size:12px;font-weight:normal;text-align:center;">和</div>
<div class="c" style="left:714px;top:457px;width:61px;height:17px;line-height:17px;color:#333;font-size:12px;font-weight:normal;text-align:center;">客</div>
<div class="c" style="left:776px;top:457px;width:37px;height:17px;line-height:17px;color:#333;font-size:12px;font-weight:normal;text-align:center;">胜负</div>
<div class="c" style="left:814px;top:457px;width:37px;height:17px;line-height:17px;color:#333;font-size:12px;font-weight:normal;text-align:center;">让球</div>
<div class="c" style="left:852px;top:457px;width:55px;height:17px;line-height:17px;color:#333;font-size:12px;font-weight:normal;text-align:center;">进球数</div>
<div class="sel" style="left:467px;top:434px;width:57px;height:18px;"><span style="position:absolute;left:4px;top:1px;line-height:18px;font-size:13px">Crow*</span><span class="arr" style="right:6px;top:6px"></span></div>
<div class="sel" style="left:534px;top:434px;width:34px;height:18px;"><span style="position:absolute;left:3px;top:1px;line-height:18px;font-size:12px">终</span><span class="arr" style="right:6px;top:6px"></span></div>
<div class="sel" style="left:620px;top:434px;width:82px;height:18px;"><span style="position:absolute;left:3px;top:1px;line-height:18px;font-size:12px">胜平负均值</span><span class="arr" style="right:6px;top:6px"></span></div>
<div class="sel" style="left:712px;top:434px;width:34px;height:18px;"><span style="position:absolute;left:3px;top:1px;line-height:18px;font-size:12px">终</span><span class="arr" style="right:6px;top:6px"></span></div>
<div class="sel" style="left:818px;top:434px;width:45px;height:18px;"><span style="position:absolute;left:4px;top:1px;line-height:18px;font-size:12px">全场</span><span class="arr" style="right:6px;top:6px"></span></div>
<div style="left:0px;top:473px;width:908px;height:1px;background:#bebebe;"></div>
<div style="left:0px;top:474px;width:70px;height:27px;background:#660033;"></div>
<div style="left:71px;top:474px;width:373px;height:27px;background:#fff;"></div>
<div style="left:445px;top:474px;width:147px;height:27px;background:#fdf9f7;"></div>
<div style="left:593px;top:474px;width:183px;height:27px;background:#eef7fb;"></div>
<div style="left:777px;top:474px;width:131px;height:27px;background:#fff;"></div>
<div class="c" style="left:-1px;top:475px;width:70px;height:27px;line-height:27px;color:#fff;font-size:12px;font-weight:normal;text-align:center;">欧洲预选</div>
<div class="t" style="left:71px;top:475px;width:73px;height:27px;line-height:27px;color:#333;font-size:12.5px;font-weight:normal;text-align:center;">25-10-15</div>
<div class="t" style="left:144px;top:475px;width:87px;height:27px;line-height:27px;color:#000;font-size:12px;font-weight:normal;text-align:center;"><span style="color:#000">安道尔</span></div>
<div class="t" style="left:233px;top:475px;width:84px;height:27px;line-height:27px;color:#333;font-size:12.5px;font-weight:normal;text-align:center;"><span style="color:#ff0000">1-3</span>(1-1)</div>
<div class="t" style="left:318px;top:475px;width:38px;height:27px;line-height:27px;color:#333;font-size:12.5px;font-weight:normal;text-align:center;">0-10</div>
<div class="t" style="left:356px;top:475px;width:87px;height:27px;line-height:27px;color:#000;font-size:12px;font-weight:normal;text-align:center;"><span style="color:#008000"><span style="-webkit-text-stroke:0.1px">塞尔维亚</span></span></div>
<div class="t" style="left:445px;top:475px;width:42px;height:27px;line-height:27px;color:#333;font-size:12.5px;font-weight:normal;text-align:center;">0.80</div>
<div class="c" style="left:487px;top:475px;width:59px;height:27px;line-height:27px;color:#333;font-size:12px;font-weight:normal;text-align:center;"><span style="color:#ff0000;font-size:13px;line-height:0;padding-right:1px;position:relative;top:-1px">*</span>两球</div>
<div class="t" style="left:548px;top:475px;width:44px;height:27px;line-height:27px;color:#333;font-size:12.5px;font-weight:normal;text-align:center;">1.08</div>
<div class="t" style="left:593px;top:475px;width:59px;height:27px;line-height:27px;color:#333;font-size:12.5px;font-weight:normal;text-align:center;">18.51</div>
<div class="t" style="left:653px;top:475px;width:61px;height:27px;line-height:27px;color:#333;font-size:12.5px;font-weight:normal;text-align:center;">6.64</div>
<div class="t" style="left:715px;top:475px;width:61px;height:27px;line-height:27px;color:#333;font-size:12.5px;font-weight:normal;text-align:center;">1.17</div>
<div class="c" style="left:776px;top:475px;width:37px;height:27px;line-height:27px;color:#ff0000;font-size:12px;font-weight:normal;text-align:center;">勝</div>
<div class="c" style="left:814px;top:475px;width:37px;height:27px;line-height:27px;color:#0000ff;font-size:12px;font-weight:normal;text-align:center;">走</div>
<div class="c" style="left:852px;top:475px;width:55px;height:27px;line-height:27px;color:#ff0000;font-size:12px;font-weight:normal;text-align:center;">大</div>
<div style="left:0px;top:501px;width:908px;height:1px;background:#bebebe;"></div>
<div style="left:0px;top:502px;width:70px;height:27px;background:#660033;"></div>
<div style="left:71px;top:502px;width:373px;height:27px;background:#efefef;"></div>
<div style="left:445px;top:502px;width:147px;height:27px;background:#fdf9f7;"></div>
<div style="left:593px;top:502px;width:183px;height:27px;background:#eef7fb;"></div>
<div style="left:777px;top:502px;width:131px;height:27px;background:#efefef;"></div>
<div class="c" style="left:-1px;top:503px;width:70px;height:27px;line-height:27px;color:#fff;font-size:12px;font-weight:normal;text-align:center;">欧洲预选</div>
<div class="t" style="left:71px;top:503px;width:73px;height:27px;line-height:27px;color:#333;font-size:12.5px;font-weight:normal;text-align:center;">25-10-12</div>
<div class="t" style="left:144px;top:503px;width:87px;height:27px;line-height:27px;color:#000;font-size:12px;font-weight:normal;text-align:center;"><span style="color:#008000"><span style="-webkit-text-stroke:0.1px">塞尔维亚</span></span></div>
<div class="t" style="left:233px;top:503px;width:84px;height:27px;line-height:27px;color:#333;font-size:12.5px;font-weight:normal;text-align:center;"><span style="color:#ff0000">0-1</span>(0-1)</div>
<div class="t" style="left:318px;top:503px;width:38px;height:27px;line-height:27px;color:#333;font-size:12.5px;font-weight:normal;text-align:center;">4-2</div>
<div class="t" style="left:356px;top:503px;width:87px;height:27px;line-height:27px;color:#000;font-size:12px;font-weight:normal;text-align:center;"><span style="color:#000">阿尔巴尼亚</span></div>
<div class="t" style="left:445px;top:503px;width:42px;height:27px;line-height:27px;color:#333;font-size:12.5px;font-weight:normal;text-align:center;">0.89</div>
<div class="c" style="left:487px;top:503px;width:59px;height:27px;line-height:27px;color:#333;font-size:12px;font-weight:normal;text-align:center;">半球</div>
<div class="t" style="left:548px;top:503px;width:44px;height:27px;line-height:27px;color:#333;font-size:12.5px;font-weight:normal;text-align:center;">0.99</div>
<div class="t" style="left:593px;top:503px;width:59px;height:27px;line-height:27px;color:#333;font-size:12.5px;font-weight:normal;text-align:center;">1.82</div>
<div class="t" style="left:653px;top:503px;width:61px;height:27px;line-height:27px;color:#333;font-size:12.5px;font-weight:normal;text-align:center;">3.28</div>
<div class="t" style="left:715px;top:503px;width:61px;height:27px;line-height:27px;color:#333;font-size:12.5px;font-weight:normal;text-align:center;">4.91</div>
<div class="c" style="left:776px;top:503px;width:37px;height:27px;line-height:27px;color:#008000;font-size:12px;font-weight:normal;text-align:center;">負</div>
<div class="c" style="left:814px;top:503px;width:37px;height:27px;line-height:27px;color:#008000;font-size:12px;font-weight:normal;text-align:center;">輸</div>
<div class="c" style="left:852px;top:503px;width:55px;height:27px;line-height:27px;color:#008000;font-size:12px;font-weight:normal;text-align:center;">小</div>
<div style="left:0px;top:529px;width:908px;height:1px;background:#bebebe;"></div>
<div style="left:0px;top:530px;width:70px;height:27px;background:#660033;"></div>
<div style="left:71px;top:530px;width:373px;height:27px;background:#fff;"></div>
<div style="left:445px;top:530px;width:147px;height:27px;background:#fdf9f7;"></div>
<div style="left:593px;top:530px;width:183px;height:27px;background:#eef7fb;"></div>
<div style="left:777px;top:530px;width:131px;height:27px;background:#fff;"></div>
<div class="c" style="left:-1px;top:531px;width:70px;height:27px;line-height:27px;color:#fff;font-size:12px;font-weight:normal;text-align:center;">欧洲预选</div>
<div class="t" style="left:71px;top:531px;width:73px;height:27px;line-height:27px;color:#333;font-size:12.5px;font-weight:normal;text-align:center;">25-09-10</div>
<div class="t" style="left:144px;top:531px;width:87px;height:27px;line-height:27px;color:#000;font-size:12px;font-weight:normal;text-align:center;"><span class="bd">1</span><span style="color:#008000"><span style="-webkit-text-stroke:0.1px">塞尔维亚</span></span></div>
<div class="t" style="left:233px;top:531px;width:84px;height:27px;line-height:27px;color:#333;font-size:12.5px;font-weight:normal;text-align:center;"><span style="color:#ff0000">0-5</span>(0-2)</div>
<div class="t" style="left:318px;top:531px;width:38px;height:27px;line-height:27px;color:#333;font-size:12.5px;font-weight:normal;text-align:center;">2-6</div>
<div class="t" style="left:356px;top:531px;width:87px;height:27px;line-height:27px;color:#000;font-size:12px;font-weight:normal;text-align:center;"><span style="color:#000">英格兰</span></div>
<div class="t" style="left:445px;top:531px;width:42px;height:27px;line-height:27px;color:#333;font-size:12.5px;font-weight:normal;text-align:center;">0.91</div>
<div class="c" style="left:487px;top:531px;width:59px;height:27px;line-height:27px;color:#333;font-size:12px;font-weight:normal;text-align:center;"><span style="color:#ff0000;font-size:13px;line-height:0;padding-right:1px;position:relative;top:-1px">*</span>半球</div>
<div class="t" style="left:548px;top:531px;width:44px;height:27px;line-height:27px;color:#333;font-size:12.5px;font-weight:normal;text-align:center;">0.98</div>
<div class="t" style="left:593px;top:531px;width:59px;height:27px;line-height:27px;color:#333;font-size:12.5px;font-weight:normal;text-align:center;">4.28</div>
<div class="t" style="left:653px;top:531px;width:61px;height:27px;line-height:27px;color:#333;font-size:12.5px;font-weight:normal;text-align:center;">3.37</div>
<div class="t" style="left:715px;top:531px;width:61px;height:27px;line-height:27px;color:#333;font-size:12.5px;font-weight:normal;text-align:center;">1.91</div>
<div class="c" style="left:776px;top:531px;width:37px;height:27px;line-height:27px;color:#008000;font-size:12px;font-weight:normal;text-align:center;">負</div>
<div class="c" style="left:814px;top:531px;width:37px;height:27px;line-height:27px;color:#008000;font-size:12px;font-weight:normal;text-align:center;">輸</div>
<div class="c" style="left:852px;top:531px;width:55px;height:27px;line-height:27px;color:#ff0000;font-size:12px;font-weight:normal;text-align:center;">大</div>
<div style="left:0px;top:557px;width:908px;height:1px;background:#bebebe;"></div>
<div style="left:0px;top:558px;width:70px;height:27px;background:#660033;"></div>
<div style="left:71px;top:558px;width:373px;height:27px;background:#efefef;"></div>
<div style="left:445px;top:558px;width:147px;height:27px;background:#fdf9f7;"></div>
<div style="left:593px;top:558px;width:183px;height:27px;background:#eef7fb;"></div>
<div style="left:777px;top:558px;width:131px;height:27px;background:#efefef;"></div>
<div class="c" style="left:-1px;top:559px;width:70px;height:27px;line-height:27px;color:#fff;font-size:12px;font-weight:normal;text-align:center;">欧洲预选</div>
<div class="t" style="left:71px;top:559px;width:73px;height:27px;line-height:27px;color:#333;font-size:12.5px;font-weight:normal;text-align:center;">25-09-06</div>
<div class="t" style="left:144px;top:559px;width:87px;height:27px;line-height:27px;color:#000;font-size:12px;font-weight:normal;text-align:center;"><span style="color:#000">拉脱维亚</span></div>
<div class="t" style="left:233px;top:559px;width:84px;height:27px;line-height:27px;color:#333;font-size:12.5px;font-weight:normal;text-align:center;"><span style="color:#ff0000">0-1</span>(0-1)</div>
<div class="t" style="left:318px;top:559px;width:38px;height:27px;line-height:27px;color:#333;font-size:12.5px;font-weight:normal;text-align:center;">3-7</div>
<div class="t" style="left:356px;top:559px;width:87px;height:27px;line-height:27px;color:#000;font-size:12px;font-weight:normal;text-align:center;"><span style="color:#008000"><span style="-webkit-text-stroke:0.1px">塞尔维亚</span></span></div>
<div class="t" style="left:445px;top:559px;width:42px;height:27px;line-height:27px;color:#333;font-size:12.5px;font-weight:normal;text-align:center;">0.96</div>
<div class="c" style="left:487px;top:559px;width:59px;height:27px;line-height:27px;color:#333;font-size:12px;font-weight:normal;text-align:center;"><span style="color:#ff0000;font-size:13px;line-height:0;padding-right:1px;position:relative;top:-1px">*</span>球半</div>
<div class="t" style="left:548px;top:559px;width:44px;height:27px;line-height:27px;color:#333;font-size:12.5px;font-weight:normal;text-align:center;">0.93</div>
<div class="t" style="left:593px;top:559px;width:59px;height:27px;line-height:27px;color:#333;font-size:12.5px;font-weight:normal;text-align:center;">10.44</div>
<div class="t" style="left:653px;top:559px;width:61px;height:27px;line-height:27px;color:#333;font-size:12.5px;font-weight:normal;text-align:center;">5.13</div>
<div class="t" style="left:715px;top:559px;width:61px;height:27px;line-height:27px;color:#333;font-size:12.5px;font-weight:normal;text-align:center;">1.30</div>
<div class="c" style="left:776px;top:559px;width:37px;height:27px;line-height:27px;color:#ff0000;font-size:12px;font-weight:normal;text-align:center;">勝</div>
<div class="c" style="left:814px;top:559px;width:37px;height:27px;line-height:27px;color:#008000;font-size:12px;font-weight:normal;text-align:center;">輸</div>
<div class="c" style="left:852px;top:559px;width:55px;height:27px;line-height:27px;color:#008000;font-size:12px;font-weight:normal;text-align:center;">小</div>
<div style="left:0px;top:585px;width:908px;height:1px;background:#bebebe;"></div>
<div style="left:0px;top:586px;width:70px;height:27px;background:#660033;"></div>
<div style="left:71px;top:586px;width:373px;height:27px;background:#fff;"></div>
<div style="left:445px;top:586px;width:147px;height:27px;background:#fdf9f7;"></div>
<div style="left:593px;top:586px;width:183px;height:27px;background:#eef7fb;"></div>
<div style="left:777px;top:586px;width:131px;height:27px;background:#fff;"></div>
<div class="c" style="left:-1px;top:587px;width:70px;height:27px;line-height:27px;color:#fff;font-size:12px;font-weight:normal;text-align:center;">欧洲预选</div>
<div class="t" style="left:71px;top:587px;width:73px;height:27px;line-height:27px;color:#333;font-size:12.5px;font-weight:normal;text-align:center;">25-06-11</div>
<div class="t" style="left:144px;top:587px;width:87px;height:27px;line-height:27px;color:#000;font-size:12px;font-weight:normal;text-align:center;"><span style="color:#008000"><span style="-webkit-text-stroke:0.1px">塞尔维亚</span></span></div>
<div class="t" style="left:233px;top:587px;width:84px;height:27px;line-height:27px;color:#333;font-size:12.5px;font-weight:normal;text-align:center;"><span style="color:#ff0000">3-0</span>(2-0)</div>
<div class="t" style="left:318px;top:587px;width:38px;height:27px;line-height:27px;color:#333;font-size:12.5px;font-weight:normal;text-align:center;">10-1</div>
<div class="t" style="left:356px;top:587px;width:87px;height:27px;line-height:27px;color:#000;font-size:12px;font-weight:normal;text-align:center;"><span style="color:#000">安道尔</span></div>
<div class="t" style="left:445px;top:587px;width:42px;height:27px;line-height:27px;color:#333;font-size:12.5px;font-weight:normal;text-align:center;">0.91</div>
<div class="c" style="left:487px;top:587px;width:59px;height:27px;line-height:27px;color:#333;font-size:12px;font-weight:normal;text-align:center;">两球半</div>
<div class="t" style="left:548px;top:587px;width:44px;height:27px;line-height:27px;color:#333;font-size:12.5px;font-weight:normal;text-align:center;">0.98</div>
<div class="t" style="left:593px;top:587px;width:59px;height:27px;line-height:27px;color:#333;font-size:12.5px;font-weight:normal;text-align:center;">1.05</div>
<div class="t" style="left:653px;top:587px;width:61px;height:27px;line-height:27px;color:#333;font-size:12.5px;font-weight:normal;text-align:center;">11.84</div>
<div class="t" style="left:715px;top:587px;width:61px;height:27px;line-height:27px;color:#333;font-size:12.5px;font-weight:normal;text-align:center;">42.53</div>
<div class="c" style="left:776px;top:587px;width:37px;height:27px;line-height:27px;color:#ff0000;font-size:12px;font-weight:normal;text-align:center;">勝</div>
<div class="c" style="left:814px;top:587px;width:37px;height:27px;line-height:27px;color:#ff0000;font-size:12px;font-weight:normal;text-align:center;">贏</div>
<div class="c" style="left:852px;top:587px;width:55px;height:27px;line-height:27px;color:#0000ff;font-size:12px;font-weight:normal;text-align:center;">走</div>
<div style="left:0px;top:613px;width:908px;height:1px;background:#bebebe;"></div>
<div style="left:0px;top:614px;width:70px;height:27px;background:#660033;"></div>
<div style="left:71px;top:614px;width:373px;height:27px;background:#efefef;"></div>
<div style="left:445px;top:614px;width:147px;height:27px;background:#fdf9f7;"></div>
<div style="left:593px;top:614px;width:183px;height:27px;background:#eef7fb;"></div>
<div style="left:777px;top:614px;width:131px;height:27px;background:#efefef;"></div>
<div class="c" style="left:-1px;top:615px;width:70px;height:27px;line-height:27px;color:#fff;font-size:12px;font-weight:normal;text-align:center;">欧洲预选</div>
<div class="t" style="left:71px;top:615px;width:73px;height:27px;line-height:27px;color:#333;font-size:12.5px;font-weight:normal;text-align:center;">25-06-08</div>
<div class="t" style="left:144px;top:615px;width:87px;height:27px;line-height:27px;color:#000;font-size:12px;font-weight:normal;text-align:center;"><span style="color:#000">阿尔巴尼亚</span></div>
<div class="t" style="left:233px;top:615px;width:84px;height:27px;line-height:27px;color:#333;font-size:12.5px;font-weight:normal;text-align:center;"><span style="color:#ff0000">0-0</span>(0-0)</div>
<div class="t" style="left:318px;top:615px;width:38px;height:27px;line-height:27px;color:#333;font-size:12.5px;font-weight:normal;text-align:center;">4-4</div>
<div class="t" style="left:356px;top:615px;width:87px;height:27px;line-height:27px;color:#000;font-size:12px;font-weight:normal;text-align:center;"><span style="color:#008000"><span style="-webkit-text-stroke:0.1px">塞尔维亚</span></span></div>
<div class="t" style="left:445px;top:615px;width:42px;height:27px;line-height:27px;color:#333;font-size:12.5px;font-weight:normal;text-align:center;">0.93</div>
<div class="c" style="left:487px;top:615px;width:59px;height:27px;line-height:27px;color:#333;font-size:12px;font-weight:normal;text-align:center;"><span style="color:#ff0000;font-size:13px;line-height:0;padding-right:1px;position:relative;top:-1px">*</span>平/半</div>
<div class="t" style="left:548px;top:615px;width:44px;height:27px;line-height:27px;color:#333;font-size:12.5px;font-weight:normal;text-align:center;">0.96</div>
<div class="t" style="left:593px;top:615px;width:59px;height:27px;line-height:27px;color:#333;font-size:12.5px;font-weight:normal;text-align:center;">3.69</div>
<div class="t" style="left:653px;top:615px;width:61px;height:27px;line-height:27px;color:#333;font-size:12.5px;font-weight:normal;text-align:center;">2.97</div>
<div class="t" style="left:715px;top:615px;width:61px;height:27px;line-height:27px;color:#333;font-size:12.5px;font-weight:normal;text-align:center;">2.21</div>
<div class="c" style="left:776px;top:615px;width:37px;height:27px;line-height:27px;color:#0000ff;font-size:12px;font-weight:normal;text-align:center;">平</div>
<div class="c" style="left:814px;top:615px;width:37px;height:27px;line-height:27px;color:#008000;font-size:12px;font-weight:normal;text-align:center;">輸</div>
<div class="c" style="left:852px;top:615px;width:55px;height:27px;line-height:27px;color:#008000;font-size:12px;font-weight:normal;text-align:center;">小</div>
<div style="left:0px;top:641px;width:908px;height:1px;background:#bebebe;"></div>
<div style="left:0px;top:642px;width:70px;height:27px;background:#fe9b10;"></div>
<div style="left:71px;top:642px;width:373px;height:27px;background:#fff;"></div>
<div style="left:445px;top:642px;width:147px;height:27px;background:#fdf9f7;"></div>
<div style="left:593px;top:642px;width:183px;height:27px;background:#eef7fb;"></div>
<div style="left:777px;top:642px;width:131px;height:27px;background:#fff;"></div>
<div class="c" style="left:-1px;top:643px;width:70px;height:27px;line-height:27px;color:#fff;font-size:12px;font-weight:normal;text-align:center;">欧国联</div>
<div class="t" style="left:71px;top:643px;width:73px;height:27px;line-height:27px;color:#333;font-size:12.5px;font-weight:normal;text-align:center;">25-03-24</div>
<div class="t" style="left:144px;top:643px;width:87px;height:27px;line-height:27px;color:#000;font-size:12px;font-weight:normal;text-align:center;"><span style="color:#008000"><span style="-webkit-text-stroke:0.1px">塞尔维亚</span></span></div>
<div class="t" style="left:233px;top:643px;width:84px;height:27px;line-height:27px;color:#333;font-size:12.5px;font-weight:normal;text-align:center;"><span style="color:#ff0000">2-0</span>(0-0)</div>
<div class="t" style="left:318px;top:643px;width:38px;height:27px;line-height:27px;color:#333;font-size:12.5px;font-weight:normal;text-align:center;">2-3</div>
<div class="t" style="left:356px;top:643px;width:87px;height:27px;line-height:27px;color:#000;font-size:12px;font-weight:normal;text-align:center;"><span style="color:#000">奥地利</span><span class="bd">1</span></div>
<div class="t" style="left:445px;top:643px;width:42px;height:27px;line-height:27px;color:#333;font-size:12.5px;font-weight:normal;text-align:center;">1.09</div>
<div class="c" style="left:487px;top:643px;width:59px;height:27px;line-height:27px;color:#333;font-size:12px;font-weight:normal;text-align:center;">平手</div>
<div class="t" style="left:548px;top:643px;width:44px;height:27px;line-height:27px;color:#333;font-size:12.5px;font-weight:normal;text-align:center;">0.80</div>
<div class="t" style="left:593px;top:643px;width:59px;height:27px;line-height:27px;color:#333;font-size:12.5px;font-weight:normal;text-align:center;">2.81</div>
<div class="t" style="left:653px;top:643px;width:61px;height:27px;line-height:27px;color:#333;font-size:12.5px;font-weight:normal;text-align:center;">3.10</div>
<div class="t" style="left:715px;top:643px;width:61px;height:27px;line-height:27px;color:#333;font-size:12.5px;font-weight:normal;text-align:center;">2.63</div>
<div class="c" style="left:776px;top:643px;width:37px;height:27px;line-height:27px;color:#ff0000;font-size:12px;font-weight:normal;text-align:center;">勝</div>
<div class="c" style="left:814px;top:643px;width:37px;height:27px;line-height:27px;color:#ff0000;font-size:12px;font-weight:normal;text-align:center;">贏</div>
<div class="c" style="left:852px;top:643px;width:55px;height:27px;line-height:27px;color:#008000;font-size:12px;font-weight:normal;text-align:center;">小</div>
<div style="left:0px;top:669px;width:908px;height:1px;background:#bebebe;"></div>
<div style="left:0px;top:670px;width:70px;height:27px;background:#fe9b10;"></div>
<div style="left:71px;top:670px;width:373px;height:27px;background:#efefef;"></div>
<div style="left:445px;top:670px;width:147px;height:27px;background:#fdf9f7;"></div>
<div style="left:593px;top:670px;width:183px;height:27px;background:#eef7fb;"></div>
<div style="left:777px;top:670px;width:131px;height:27px;background:#efefef;"></div>
<div class="c" style="left:-1px;top:671px;width:70px;height:27px;line-height:27px;color:#fff;font-size:12px;font-weight:normal;text-align:center;">欧国联</div>
<div class="t" style="left:71px;top:671px;width:73px;height:27px;line-height:27px;color:#333;font-size:12.5px;font-weight:normal;text-align:center;">25-03-21</div>
<div class="t" style="left:144px;top:671px;width:87px;height:27px;line-height:27px;color:#000;font-size:12px;font-weight:normal;text-align:center;"><span style="color:#000">奥地利</span></div>
<div class="t" style="left:233px;top:671px;width:84px;height:27px;line-height:27px;color:#333;font-size:12.5px;font-weight:normal;text-align:center;"><span style="color:#ff0000">1-1</span>(1-0)</div>
<div class="t" style="left:318px;top:671px;width:38px;height:27px;line-height:27px;color:#333;font-size:12.5px;font-weight:normal;text-align:center;">3-2</div>
<div class="t" style="left:356px;top:671px;width:87px;height:27px;line-height:27px;color:#000;font-size:12px;font-weight:normal;text-align:center;"><span style="color:#008000"><span style="-webkit-text-stroke:0.1px">塞尔维亚</span></span></div>
<div class="t" style="left:445px;top:671px;width:42px;height:27px;line-height:27px;color:#333;font-size:12.5px;font-weight:normal;text-align:center;">0.89</div>
<div class="c" style="left:487px;top:671px;width:59px;height:27px;line-height:27px;color:#333;font-size:12px;font-weight:normal;text-align:center;">半/一</div>
<div class="t" style="left:548px;top:671px;width:44px;height:27px;line-height:27px;color:#333;font-size:12.5px;font-weight:normal;text-align:center;">1.00</div>
<div class="t" style="left:593px;top:671px;width:59px;height:27px;line-height:27px;color:#333;font-size:12.5px;font-weight:normal;text-align:center;">1.68</div>
<div class="t" style="left:653px;top:671px;width:61px;height:27px;line-height:27px;color:#333;font-size:12.5px;font-weight:normal;text-align:center;">3.67</div>
<div class="t" style="left:715px;top:671px;width:61px;height:27px;line-height:27px;color:#333;font-size:12.5px;font-weight:normal;text-align:center;">5.23</div>
<div class="c" style="left:776px;top:671px;width:37px;height:27px;line-height:27px;color:#0000ff;font-size:12px;font-weight:normal;text-align:center;">平</div>
<div class="c" style="left:814px;top:671px;width:37px;height:27px;line-height:27px;color:#ff0000;font-size:12px;font-weight:normal;text-align:center;">贏</div>
<div class="c" style="left:852px;top:671px;width:55px;height:27px;line-height:27px;color:#008000;font-size:12px;font-weight:normal;text-align:center;">小</div>
<div style="left:0px;top:697px;width:908px;height:1px;background:#bebebe;"></div>
<div style="left:0px;top:698px;width:70px;height:27px;background:#fe9b10;"></div>
<div style="left:71px;top:698px;width:373px;height:27px;background:#fff;"></div>
<div style="left:445px;top:698px;width:147px;height:27px;background:#fdf9f7;"></div>
<div style="left:593px;top:698px;width:183px;height:27px;background:#eef7fb;"></div>
<div style="left:777px;top:698px;width:131px;height:27px;background:#fff;"></div>
<div class="c" style="left:-1px;top:699px;width:70px;height:27px;line-height:27px;color:#fff;font-size:12px;font-weight:normal;text-align:center;">欧国联</div>
<div class="t" style="left:71px;top:699px;width:73px;height:27px;line-height:27px;color:#333;font-size:12.5px;font-weight:normal;text-align:center;">24-11-19</div>
<div class="t" style="left:144px;top:699px;width:87px;height:27px;line-height:27px;color:#000;font-size:12px;font-weight:normal;text-align:center;"><span class="bd">1</span><span style="color:#008000"><span style="-webkit-text-stroke:0.1px">塞尔维亚</span></span></div>
<div class="t" style="left:233px;top:699px;width:84px;height:27px;line-height:27px;color:#333;font-size:12.5px;font-weight:normal;text-align:center;"><span style="color:#ff0000">0-0</span>(0-0)</div>
<div class="t" style="left:318px;top:699px;width:38px;height:27px;line-height:27px;color:#333;font-size:12.5px;font-weight:normal;text-align:center;">7-3</div>
<div class="t" style="left:356px;top:699px;width:87px;height:27px;line-height:27px;color:#000;font-size:12px;font-weight:normal;text-align:center;"><span style="color:#000">丹麦</span></div>
<div class="t" style="left:445px;top:699px;width:42px;height:27px;line-height:27px;color:#333;font-size:12.5px;font-weight:normal;text-align:center;">0.88</div>
<div class="c" style="left:487px;top:699px;width:59px;height:27px;line-height:27px;color:#333;font-size:12px;font-weight:normal;text-align:center;">平手</div>
<div class="t" style="left:548px;top:699px;width:44px;height:27px;line-height:27px;color:#333;font-size:12.5px;font-weight:normal;text-align:center;">1.01</div>
<div class="t" style="left:593px;top:699px;width:59px;height:27px;line-height:27px;color:#333;font-size:12.5px;font-weight:normal;text-align:center;">2.55</div>
<div class="t" style="left:653px;top:699px;width:61px;height:27px;line-height:27px;color:#333;font-size:12.5px;font-weight:normal;text-align:center;">3.25</div>
<div class="t" style="left:715px;top:699px;width:61px;height:27px;line-height:27px;color:#333;font-size:12.5px;font-weight:normal;text-align:center;">2.83</div>
<div class="c" style="left:776px;top:699px;width:37px;height:27px;line-height:27px;color:#0000ff;font-size:12px;font-weight:normal;text-align:center;">平</div>
<div class="c" style="left:814px;top:699px;width:37px;height:27px;line-height:27px;color:#0000ff;font-size:12px;font-weight:normal;text-align:center;">走</div>
<div class="c" style="left:852px;top:699px;width:55px;height:27px;line-height:27px;color:#008000;font-size:12px;font-weight:normal;text-align:center;">小</div>
<div style="left:0px;top:725px;width:908px;height:1px;background:#bebebe;"></div>
<div style="left:0px;top:726px;width:70px;height:27px;background:#fe9b10;"></div>
<div style="left:71px;top:726px;width:373px;height:27px;background:#efefef;"></div>
<div style="left:445px;top:726px;width:147px;height:27px;background:#fdf9f7;"></div>
<div style="left:593px;top:726px;width:183px;height:27px;background:#eef7fb;"></div>
<div style="left:777px;top:726px;width:131px;height:27px;background:#efefef;"></div>
<div class="c" style="left:-1px;top:727px;width:70px;height:27px;line-height:27px;color:#fff;font-size:12px;font-weight:normal;text-align:center;">欧国联</div>
<div class="t" style="left:71px;top:727px;width:73px;height:27px;line-height:27px;color:#333;font-size:12.5px;font-weight:normal;text-align:center;">24-11-16</div>
<div class="t" style="left:144px;top:727px;width:87px;height:27px;line-height:27px;color:#000;font-size:12px;font-weight:normal;text-align:center;"><span style="color:#000">瑞士</span></div>
<div class="t" style="left:233px;top:727px;width:84px;height:27px;line-height:27px;color:#333;font-size:12.5px;font-weight:normal;text-align:center;"><span style="color:#ff0000">1-1</span>(0-0)</div>
<div class="t" style="left:318px;top:727px;width:38px;height:27px;line-height:27px;color:#333;font-size:12.5px;font-weight:normal;text-align:center;">5-3</div>
<div class="t" style="left:356px;top:727px;width:87px;height:27px;line-height:27px;color:#000;font-size:12px;font-weight:normal;text-align:center;"><span style="color:#008000"><span style="-webkit-text-stroke:0.1px">塞尔维亚</span></span></div>
<div class="t" style="left:445px;top:727px;width:42px;height:27px;line-height:27px;color:#333;font-size:12.5px;font-weight:normal;text-align:center;">0.85</div>
<div class="c" style="left:487px;top:727px;width:59px;height:27px;line-height:27px;color:#333;font-size:12px;font-weight:normal;text-align:center;">半球</div>
<div class="t" style="left:548px;top:727px;width:44px;height:27px;line-height:27px;color:#333;font-size:12.5px;font-weight:normal;text-align:center;">1.04</div>
<div class="t" style="left:593px;top:727px;width:59px;height:27px;line-height:27px;color:#333;font-size:12.5px;font-weight:normal;text-align:center;">1.74</div>
<div class="t" style="left:653px;top:727px;width:61px;height:27px;line-height:27px;color:#333;font-size:12.5px;font-weight:normal;text-align:center;">3.73</div>
<div class="t" style="left:715px;top:727px;width:61px;height:27px;line-height:27px;color:#333;font-size:12.5px;font-weight:normal;text-align:center;">4.68</div>
<div class="c" style="left:776px;top:727px;width:37px;height:27px;line-height:27px;color:#0000ff;font-size:12px;font-weight:normal;text-align:center;">平</div>
<div class="c" style="left:814px;top:727px;width:37px;height:27px;line-height:27px;color:#ff0000;font-size:12px;font-weight:normal;text-align:center;">贏</div>
<div class="c" style="left:852px;top:727px;width:55px;height:27px;line-height:27px;color:#008000;font-size:12px;font-weight:normal;text-align:center;">小</div>
<div style="left:0px;top:753px;width:908px;height:1px;background:#bebebe;"></div>
<div style="left:70px;top:432px;width:1px;height:321px;background:#bebebe;"></div>
<div style="left:144px;top:432px;width:1px;height:321px;background:#bebebe;"></div>
<div style="left:232px;top:432px;width:1px;height:321px;background:#bebebe;"></div>
<div style="left:317px;top:432px;width:1px;height:321px;background:#bebebe;"></div>
<div style="left:356px;top:432px;width:1px;height:321px;background:#bebebe;"></div>
<div style="left:444px;top:432px;width:1px;height:321px;background:#bebebe;"></div>
<div style="left:487px;top:455px;width:1px;height:298px;background:#bebebe;"></div>
<div style="left:547px;top:455px;width:1px;height:298px;background:#bebebe;"></div>
<div style="left:592px;top:432px;width:1px;height:321px;background:#bebebe;"></div>
<div style="left:652px;top:455px;width:1px;height:298px;background:#bebebe;"></div>
<div style="left:714px;top:455px;width:1px;height:298px;background:#bebebe;"></div>
<div style="left:776px;top:432px;width:1px;height:321px;background:#bebebe;"></div>
<div style="left:814px;top:455px;width:1px;height:298px;background:#bebebe;"></div>
<div style="left:852px;top:455px;width:1px;height:298px;background:#bebebe;"></div>
</body></html>
